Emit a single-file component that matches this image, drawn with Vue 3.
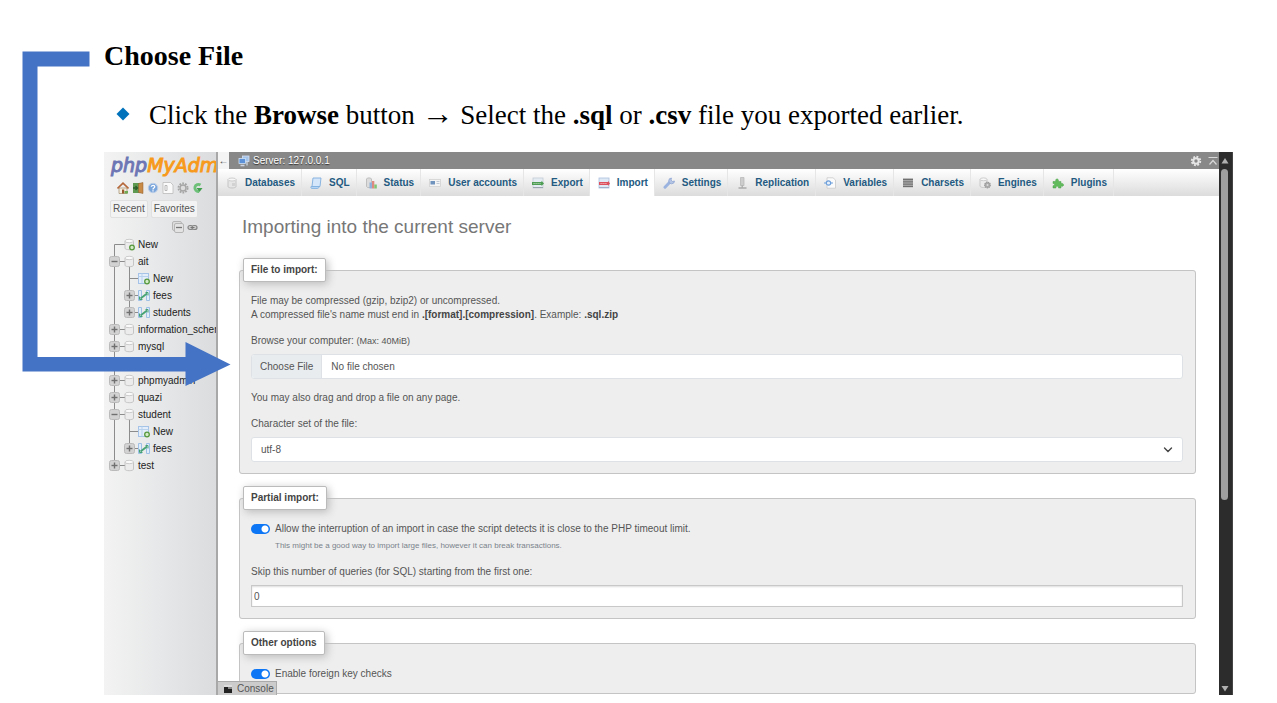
<script setup>
import { ref } from 'vue'

const tabs = [
  { id: 'db', label: 'Databases' },
  { id: 'sql', label: 'SQL' },
  { id: 'status', label: 'Status' },
  { id: 'users', label: 'User accounts' },
  { id: 'export', label: 'Export' },
  { id: 'import', label: 'Import', active: true },
  { id: 'settings', label: 'Settings' },
  { id: 'repl', label: 'Replication' },
  { id: 'vars', label: 'Variables' },
  { id: 'chars', label: 'Charsets' },
  { id: 'engines', label: 'Engines' },
  { id: 'plugins', label: 'Plugins' },
]

const tree = [
  { cells: ['first', 'dbnew'], label: 'New' },
  { cells: ['minus', 'dbopen'], label: 'ait' },
  { cells: ['line', 'tee', 'tblnew'], label: 'New' },
  { cells: ['line', 'plus', 'tbl'], label: 'fees' },
  { cells: ['line', 'pluslast', 'tbl'], label: 'students' },
  { cells: ['plus', 'db'], label: 'information_schema' },
  { cells: ['plus', 'db'], label: 'mysql' },
  { cells: ['plus', 'db'], label: '' },
  { cells: ['plus', 'db'], label: 'phpmyadmin' },
  { cells: ['plus', 'db'], label: 'quazi' },
  { cells: ['minus', 'dbopen'], label: 'student' },
  { cells: ['line', 'tee', 'tblnew'], label: 'New' },
  { cells: ['line', 'pluslast', 'tbl'], label: 'fees' },
  { cells: ['pluslast', 'db'], label: 'test' },
]

const charset = ref('utf-8')
const skip = ref('0')
const allowInterrupt = ref(true)
const foreignKeys = ref(true)
</script>

<template>
  <div class="slide">
    <h1 class="title">Choose File</h1>
    <ul class="steps">
      <li>
        <svg class="diamond" width="14" height="14" viewBox="0 0 14 14"><path d="M7 0.5 13.5 7 7 13.5 0.5 7z" fill="#0072bc" /></svg>
        <span>Click the <b>Browse</b> button <span class="to">→</span> Select the <b>.sql</b> or <b>.csv</b> file you exported earlier.</span>
      </li>
    </ul>

    <div class="app">
      <aside class="side">
        <a href="#" class="logo"><span>php</span>MyAdm</a>
        <div class="quick">
          <a href="#" aria-label="Home">
            <svg viewBox="0 0 12 12"><path d="M2 6h8v5.5H2z" fill="#f5efe0" stroke="#a08a68" stroke-width=".7" /><path d="M.5 6.5 6 1.2l5.500 5.300" fill="none" stroke="#b5693a" stroke-width="1.600" /><path d="M5 7.500h2.200v4H5z" fill="#9a5a30" /><path d="M7.500 9h3.500v2.500H7.500z" fill="#6faa55" /></svg>
          </a>
          <a href="#" aria-label="Log out">
            <svg viewBox="0 0 12 12"><path d="M1 1h10v10H1z" fill="#5f9a52" /><path d="M6.500 1.500 11 .5v11l-4.500-1z" fill="#c98a45" stroke="#8d5a2a" stroke-width=".5" /><path d="M1 6h4M3.500 4 5.500 6 3.500 8" fill="none" stroke="#2c5c2b" stroke-width="1.300" /></svg>
          </a>
          <a href="#" aria-label="Documentation">
            <svg viewBox="0 0 12 12"><circle cx="6" cy="6" r="4.700" fill="#7ba6dc" stroke="#b9cde8" /><path d="M4.300 4.800C4.400 2.800 8 3 7.700 5 7.500 6.200 6 6 6 7.400M6 8.300v1.200" fill="none" stroke="#fff" stroke-width="1.300" /></svg>
          </a>
          <a href="#" aria-label="phpMyAdmin documentation">
            <svg viewBox="0 0 12 12"><path d="M1 .5h7.500L11 3v8.500H1z" fill="#fafafa" stroke="#bbb" stroke-width=".8" /><path d="M3 3.500h2v5H3z" fill="none" stroke="#aaa" stroke-width=".8" /></svg>
          </a>
          <a href="#" aria-label="Navigation settings">
            <svg viewBox="0 0 12 12"><circle cx="6" cy="6" r="4.600" fill="none" stroke="#a5a5a5" stroke-width="1.800" stroke-dasharray="1.800 1.100" /><circle cx="6" cy="6" r="3" fill="#ddd" stroke="#a5a5a5" stroke-width="1.400" /></svg>
          </a>
          <a href="#" aria-label="Reload">
            <svg viewBox="0 0 12 12"><path d="M8.500 3A3.600 3.600 0 1 0 7 9.500" fill="none" stroke="#6cc077" stroke-width="2.800" /><path d="M4.500 6h6L7.500 10z" fill="#3f9f4c" /></svg>
          </a>
        </div>
        <div class="recent">
          <button type="button">Recent</button>
          <button type="button">Favorites</button>
        </div>
        <div class="treectl">
          <button type="button" aria-label="Collapse all">
            <svg width="12" height="12" viewBox="0 0 12 12"><rect x=".5" y=".5" width="9" height="9" rx="1.500" fill="#ddd" stroke="#b5b5b5" /><rect x="2.500" y="2.500" width="9" height="9" rx="1.500" fill="#e3e3e3" stroke="#b5b5b5" /><path d="M4 6.500h6" stroke="#777" stroke-width="1.300" /></svg>
          </button>
          <button type="button" aria-label="Unlink from main panel">
            <svg width="11" height="12" viewBox="0 0 11 12"><rect x="1" y="4.500" width="5" height="4" rx="2" fill="#ccc" stroke="#858585" stroke-width="1.200" /><rect x="5" y="4.500" width="5" height="4" rx="2" fill="#ccc" stroke="#858585" stroke-width="1.200" /><path d="M3.500 6.500h4" stroke="#777" /></svg>
          </button>
        </div>
        <ul class="tree">
          <li v-for="(row, i) in tree" :key="i">
            <svg v-for="(c, j) in row.cells" :key="j" width="15" height="17" viewBox="0 0 15 17">
              <path v-if="c === 'first'" d="M7.500 17V8.500H15" class="wire" />
              <path v-if="c === 'line' || c === 'minus' || c === 'plus'" d="M7.500 0v17" class="wire" />
              <path v-if="c === 'pluslast'" d="M7.500 0v8" class="wire" />
              <path v-if="c === 'tee'" d="M7.500 0v17M7.500 8.500H15" class="wire" />
              <path v-if="c === 'dbopen'" d="M7.500 12v5" class="wire" />
              <g v-if="c === 'plus' || c === 'minus' || c === 'pluslast'">
                <path d="M12 8.500h3" class="wire" />
                <rect x="2.500" y="3.500" width="10" height="10" rx="2" fill="#d2d2d2" stroke="#bababa" />
                <path d="M4.500 8.500h6" stroke="#707070" stroke-width="1.400" />
                <path v-if="c !== 'minus'" d="M7.500 5.500v6" stroke="#707070" stroke-width="1.400" />
              </g>
              <g v-if="c === 'db' || c === 'dbopen' || c === 'dbnew'">
                <path d="M0 8.500h3" class="wire" />
                <path d="M3 5.200v7c0 2 8.500 2 8.500 0v-7z" fill="#ececec" stroke="#bbb" stroke-width=".8" />
                <ellipse cx="7.200" cy="5" rx="4.300" ry="1.700" fill="#fafafa" stroke="#c2c2c2" stroke-width=".8" />
              </g>
              <g v-if="c === 'tblnew'">
                <path d="M0 8.500h2" class="wire" />
                <rect x="1.500" y="3.500" width="10" height="10" fill="#e4eefa" stroke="#a4c3e6" />
                <path d="M1.500 6.500h10M5 3.500v10" stroke="#b8d1ec" />
              </g>
              <g v-if="c === 'tbl'">
                <path d="M0 8.500h2" class="wire" />
                <path d="M1.500 3.500h3v10h-3zM9.500 3.500h3v10h-3z" fill="#e0ecf9" stroke="#9dc0e4" />
                <path d="M3.500 11.500 10 6.500" stroke="#46a273" stroke-width="1.800" />
                <path d="M2.500 9.500v3h3M11 8.500v-3H8.500" fill="none" stroke="#46a273" />
              </g>
              <circle v-if="c === 'dbnew' || c === 'tblnew'" cx="10" cy="11.500" r="2.300" fill="#d5ecc8" stroke="#57983d" stroke-width="1.300" />
            </svg>
            <a v-if="row.label" href="#">{{ row.label }}</a>
          </li>
        </ul>
      </aside>

      <div class="main">
        <header class="server">
          <button type="button" class="fold" aria-label="Hide panel">←</button>
          <svg class="pc" width="12" height="12" viewBox="0 0 12 12"><rect x="4.500" y="1" width="6.500" height="5.500" fill="#a5c4ea" stroke="#d5e2f4" stroke-width=".8" /><rect x="1" y="3.500" width="6.500" height="5" fill="#5d92d8" stroke="#cfe0f5" stroke-width=".8" /><path d="M2.500 10.500h4M9 7v3.500" stroke="#cdd6e2" stroke-width="1.300" /></svg>
          <a href="#">Server: 127.0.0.1</a>
          <span class="tools">
            <button type="button" aria-label="Page settings">
              <svg width="12" height="12" viewBox="0 0 12 12"><circle cx="6" cy="6" r="4.300" fill="none" stroke="#e6e6e6" stroke-width="1.800" stroke-dasharray="1.900 1.470" /><circle cx="6" cy="6" r="2.700" fill="none" stroke="#e6e6e6" stroke-width="2" /></svg>
            </button>
            <button type="button" aria-label="Scroll to top">
              <svg width="10" height="12" viewBox="0 0 10 12"><path d="M.5 2.500h9M1.500 9.500 5 5.500l3.500 4" fill="none" stroke="#d8d8d8" stroke-width="1.200" /></svg>
            </button>
          </span>
        </header>

        <nav class="tabs">
          <a v-for="t in tabs" :key="t.id" href="#" :class="{ active: t.active }">
            <svg width="12" height="12" viewBox="0 0 12 12">
              <g v-if="t.id === 'db'"><path d="M2 2.500v7c0 2 8 2 8 0v-7z" fill="#e6e6e6" stroke="#bbb" stroke-width=".8" /><ellipse cx="6" cy="2.500" rx="4" ry="1.500" fill="#f7f7f7" stroke="#c4c4c4" stroke-width=".8" /><path d="M6 6h3v3H6z" fill="#d2d2d2" /></g>
              <g v-if="t.id === 'sql'"><path d="M3 1h8l-1 8.500H2z" fill="#d3e6fa" stroke="#7faede" stroke-width=".9" /><path d="M1 9.500h8c0 1.700-1 2-2 2H2c-1 0-1.500-1-1-2z" fill="#b6d4f4" stroke="#7faede" stroke-width=".8" /></g>
              <g v-if="t.id === 'status'"><path d="M1.500 2c0-1.500 5-1.500 5 0v7.500c0 1.500-5 1.500-5 0z" fill="#dcdcdc" stroke="#b5b5b5" stroke-width=".8" /><path d="M4.500 5.500h2.500V11.500H4.500z" fill="#8fb0da" /><path d="M7 4h2.300v7.500H7z" fill="#df8a80" /><path d="M9.300 7.500h2.500v4H9.300z" fill="#7fc574" /></g>
              <g v-if="t.id === 'users'"><rect x=".5" y="2.500" width="11" height="7" fill="#f4f4f4" stroke="#d2d2d2" stroke-width=".8" /><path d="M1.500 4h4.500v3.500H1.500z" fill="#6f93bd" /><path d="M7.500 4.500h3M7.500 6.500h3" stroke="#b9c4d2" stroke-width=".9" /></g>
              <g v-if="t.id === 'export'"><rect x="1" y="1" width="10" height="10" fill="#e4ebf2" stroke="#c3ccd6" stroke-width=".8" /><path d="M0 5h9.500V3.800L12 6.500 9.500 9V8H0z" fill="#4d9d54" /><path d="M1.500 6.500h7" stroke="#cfe6ce" stroke-width=".8" stroke-dasharray="1.200 .8" /><path d="M1 10.500h10" stroke="#9aa4ae" /></g>
              <g v-if="t.id === 'import'"><rect x="1" y="1" width="10" height="10" fill="#dfe9f6" stroke="#a9bfdc" stroke-width=".8" /><path d="M1 5h9V3.800L12 6.500 10 9V8H1z" fill="#dc4f5d" /><path d="M2.500 6.500h6.500" stroke="#f9d8da" stroke-width=".8" stroke-dasharray="1.200 .8" /><path d="M1 10.500h10" stroke="#9fb0c8" /></g>
              <g v-if="t.id === 'settings'"><path d="M2 10.200 7 5" stroke="#9ab3df" stroke-width="3" stroke-linecap="round" /><path d="M8.500 1A2.900 2.900 0 1 0 11.500 4L9.500 4.500 8 3z" fill="#b3c4e4" stroke="#8aa2d0" stroke-width=".7" /></g>
              <g v-if="t.id === 'repl'"><path d="M4.500.5h3.500v8H4.500z" fill="#cdcdcd" stroke="#b5b5b5" stroke-width=".7" /><path d="M6.200 8.500V11M2.500 11h8" stroke="#aaa" stroke-width="1.300" /></g>
              <g v-if="t.id === 'vars'"><path d="M3 .8h6L11.500 3v8.200H3z" fill="#fbfbfb" stroke="#c9c9c9" stroke-width=".8" /><circle cx="4.500" cy="6" r="2.200" fill="#e6f0fb" stroke="#6d9fdb" stroke-width="1.200" /><path d="M0 6h2M7 6h2" stroke="#6d9fdb" stroke-width="1.200" /></g>
              <g v-if="t.id === 'chars'"><path d="M1 1.500h10v9H1z" fill="#b8b8b8" /><path d="M1 2.500h10M1 4.800h10M1 7.100h10M1 9.400h10" stroke="#707070" stroke-width="1.300" /></g>
              <g v-if="t.id === 'engines'"><path d="M1 2.500v6.500c0 2 7 2 7 0V2.500z" fill="#ebebeb" stroke="#bfbfbf" stroke-width=".8" /><ellipse cx="4.500" cy="2.300" rx="3.500" ry="1.400" fill="#f8f8f8" stroke="#c4c4c4" stroke-width=".8" /><circle cx="8.500" cy="8" r="2.800" fill="#aaa" stroke="#999" stroke-width="1.200" stroke-dasharray="1.300 .6" /><circle cx="8.500" cy="8" r="1" fill="#ddd" /></g>
              <g v-if="t.id === 'plugins'"><path d="M1 4.500h2.800C2.800 1 7.200 1 6.400 4.500H9v2c3.500-.8 3.500 3.600 0 2.600V11H6.500c.5-2.500-3.300-2.500-2.500 0H1V8.700c2 .4 2-2.600 0-2.200z" fill="#62bb5c" stroke="#4ba048" stroke-width=".5" /></g>
            </svg>
            {{ t.label }}
          </a>
        </nav>

        <form class="page" @submit.prevent>
          <h2>Importing into the current server</h2>

          <fieldset>
            <legend>File to import:</legend>
            <p>
              File may be compressed (gzip, bzip2) or uncompressed.<br />
              A compressed file's name must end in <b>.[format].[compression]</b>. Example: <b>.sql.zip</b>
            </p>
            <label for="file" class="field-label">Browse your computer: <small>(Max: 40MiB)</small></label>
            <input id="file" type="file" class="file" />
            <p class="note">You may also drag and drop a file on any page.</p>
            <label for="charset" class="field-label">Character set of the file:</label>
            <div class="select">
              <select id="charset" v-model="charset">
                <option>utf-8</option>
                <option>iso-8859-1</option>
              </select>
              <svg width="10" height="10" viewBox="0 0 10 10"><path d="M1.500 3 5 6.500 8.500 3" fill="none" stroke="#444" stroke-width="1.400" stroke-linecap="round" /></svg>
            </div>
          </fieldset>

          <fieldset>
            <legend>Partial import:</legend>
            <div class="switch">
              <input id="interrupt" v-model="allowInterrupt" type="checkbox" />
              <label for="interrupt">Allow the interruption of an import in case the script detects it is close to the PHP timeout limit.</label>
            </div>
            <p class="help">This might be a good way to import large files, however it can break transactions.</p>
            <label for="skip" class="field-label">Skip this number of queries (for SQL) starting from the first one:</label>
            <input id="skip" v-model="skip" type="text" class="text" />
          </fieldset>

          <fieldset>
            <legend>Other options</legend>
            <div class="switch">
              <input id="fk" v-model="foreignKeys" type="checkbox" />
              <label for="fk">Enable foreign key checks</label>
            </div>
          </fieldset>
        </form>

        <button type="button" class="console">
          <svg width="8" height="8" viewBox="0 0 8 8"><path d="M0 0h8v8H0z" fill="#222" /><path d="M0 0h8v2H0z" fill="#ddd" /><path d="M4 2h4v2H4z" fill="#888" /></svg>
          Console
        </button>
      </div>

      <div class="scroll">
        <svg width="8" height="17" viewBox="0 0 8 17"><path d="M4 6 7.500 11.500H.5z" fill="#b0b0b0" /></svg>
        <span class="thumb"></span>
        <svg class="down" width="8" height="13" viewBox="0 0 8 13"><path d="M4 9.500 7.500 4H.5z" fill="#b0b0b0" /></svg>
      </div>
    </div>

    <svg class="arrow" width="209" height="336" viewBox="0 0 209 336">
      <path d="M.5.5H67.500V15.500H15.500V306H163.500V291L208.500 313.500 163.500 335V320.500H.5z" fill="#4472c4" />
    </svg>
  </div>
</template>

<style>
body {
  margin: 0;
  background: #fff;
}
</style>

<style scoped>
.slide {
  position: relative;
  padding: 40px 44px 8px 104px;
  font-family: "Liberation Sans", Arial, sans-serif;
  font-size: 10px;
  line-height: 14px;
  color: #555;
}
.title,
.steps {
  font-family: "Liberation Serif", "Times New Roman", serif;
  font-size: 27px;
  line-height: 32px;
  color: #000;
}
.title {
  margin: 0;
  font-size: 28px;
  font-weight: 700;
}
.steps {
  margin: 26px 0 22px;
  padding: 0 0 0 12px;
  list-style: none;
}
.steps li {
  display: flex;
  align-items: center;
  gap: 19px;
  height: 32px;
}
.to {
  font-size: 32px;
  line-height: 1;
}
.diamond {
  flex: none;
}
.arrow {
  position: absolute;
  left: 22px;
  top: 51px;
  pointer-events: none;
}
a {
  color: inherit;
  text-decoration: none;
}
button {
  font: inherit;
  color: inherit;
  border: 0;
  padding: 0;
  background: none;
}
svg {
  display: block;
  flex: none;
}
.app {
  display: flex;
}

/* navigation panel */
.side {
  box-sizing: border-box;
  flex: none;
  width: 114px;
  overflow: hidden;
  border-right: 2px solid #a8a8a8;
  background: linear-gradient(90deg, #f3f3f3, #dadcde);
}
.logo {
  display: block;
  padding-left: 7px;
  font: italic 19px/26px "DejaVu Sans", sans-serif;
  color: #f79a1c;
  -webkit-text-stroke: 1px;
}
.logo span {
  color: #6d76b4;
}
.quick {
  display: flex;
  gap: 3px;
  padding: 4px 0 0 13px;
}
.quick svg {
  width: 12px;
  height: 12px;
}
.recent {
  display: flex;
  gap: 3px;
  padding: 6px 0 0 6px;
}
.recent button {
  height: 18px;
  padding: 0 2px;
  border: 1px solid #e0e0e0;
  border-radius: 2px;
  background: #f3f3f3;
  line-height: 16px;
}
.treectl {
  display: flex;
  align-items: center;
  gap: 3px;
  height: 18px;
  padding-left: 68px;
}
.tree {
  margin: 0;
  padding: 0 0 0 3px;
  list-style: none;
  color: #222;
}
.tree li {
  display: flex;
  height: 17px;
  line-height: 17px;
  white-space: nowrap;
}
.tree a {
  padding-left: 1px;
}
.wire {
  fill: none;
  stroke: #8c8c8c;
}

/* main panel */
.main {
  position: relative;
  flex: 1;
  min-width: 0;
  background: #fff;
}
.server {
  display: flex;
  align-items: center;
  height: 17px;
  background: #888;
  color: #fff;
  text-shadow: 0 1px 1px #333;
}
.fold {
  width: 11px;
  height: 17px;
  margin-right: 9px;
  background: #f4f4f4;
  color: #444;
  line-height: 17px;
  text-shadow: none;
}
.pc {
  margin-right: 3px;
}
.tools {
  display: flex;
  gap: 6px;
  margin-left: auto;
  padding-right: 1px;
}
.tabs {
  display: flex;
  background: linear-gradient(#fff, #dcdcdc);
  color: #235a81;
  font-weight: 700;
}
.tabs a {
  display: flex;
  align-items: center;
  gap: 7px;
  height: 27px;
  padding: 0 6px 0 8px;
  border-right: 1px solid #e6e6e6;
  white-space: nowrap;
}
.tabs .active {
  background: #fff;
}
.page {
  padding: 19px 23px 1px 21px;
}
h2 {
  margin: 0 0 19px 3px;
  font-size: 19px;
  font-weight: 400;
  line-height: 24px;
  color: #777;
}
fieldset {
  min-width: 0;
  margin: 0 0 12px;
  padding: 12px 12px 11px 11px;
  border: 1px solid #c4c4c4;
  border-radius: 3px;
  background: #eee;
}
fieldset:last-of-type {
  margin-bottom: 0;
  padding-bottom: 12px;
}
legend {
  box-sizing: border-box;
  height: 24px;
  margin-left: -8px;
  padding: 0 7px;
  border: 1px solid #bbb;
  border-radius: 2px;
  background: #fff;
  box-shadow: 2px 2px 8px #bbb;
  color: #444;
  font-weight: 700;
  line-height: 22px;
}
p {
  margin: 0;
}
p b {
  color: #444;
}
small {
  font-size: 9px;
}
.field-label {
  display: block;
  margin: 12px 0 6px;
}
.file,
.text,
select {
  display: block;
  box-sizing: border-box;
  width: 100%;
  height: 25px;
  border: 1px solid #dee2e6;
  border-radius: 3px;
  background: #fff;
  color: #555;
  font: inherit;
}
.file {
  line-height: 23px;
}
.file::file-selector-button {
  height: 23px;
  margin: 0 9px 0 0;
  padding: 0 8px;
  border: 0;
  border-right: 1px solid #dee2e6;
  background: #e9ecef;
  color: #555;
  font: inherit;
}
.note {
  margin-top: 12px;
}
.select {
  position: relative;
}
select {
  appearance: none;
  padding: 0 9px;
}
.select svg {
  position: absolute;
  right: 10px;
  top: 8px;
  pointer-events: none;
}
.text {
  height: 22px;
  padding: 0 2px;
  border: 1px solid #c8c8c8;
  border-radius: 0;
  box-shadow: inset 0 1px 2px #ddd;
}
.switch {
  display: flex;
  align-items: center;
  gap: 5px;
}
.switch input {
  appearance: none;
  width: 19px;
  height: 10px;
  margin: 0;
  border-radius: 5px;
  background: #ccc radial-gradient(circle at 5px 5px, #fff 3px, transparent 4px);
}
.switch input:checked {
  background: #0d76f5 radial-gradient(circle at 14px 5px, #fff 3px, transparent 4px);
}
.help {
  margin: 3px 0 0 24px;
  color: #7a838b;
  font-size: 8px;
}
.console {
  position: absolute;
  left: 0;
  bottom: 0;
  display: flex;
  align-items: center;
  gap: 5px;
  height: 14px;
  padding: 0 2px 0 6px;
  border: 1px solid #aaa;
  border-width: 1px 1px 0 0;
  background: #ccc;
}

/* scroll bar of the browser window */
.scroll {
  display: flex;
  flex: none;
  flex-direction: column;
  width: 11px;
  padding-left: 2px;
  border-right: 1px solid #444;
  background: #2c2c2c;
}
.thumb {
  flex: 0 0 61%;
  width: 7px;
  border-radius: 4px;
  background: #9f9f9f;
}
.down {
  margin-top: auto;
}
</style>
